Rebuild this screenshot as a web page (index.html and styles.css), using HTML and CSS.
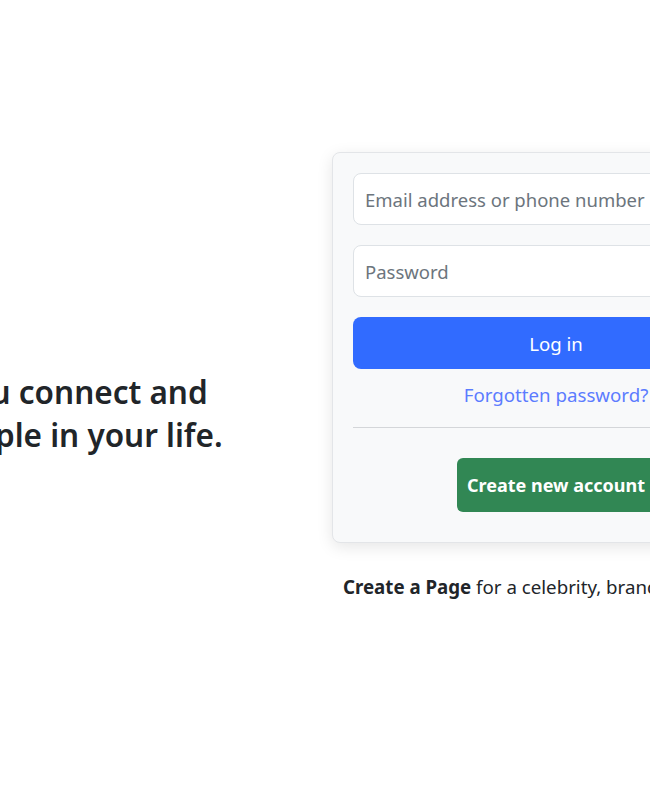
FILE: index.html
```html
<!DOCTYPE html>
<html lang="en">
<head>
<meta charset="utf-8">
<title>Facebook – log in or sign up</title>
<link rel="stylesheet" href="styles.css">
</head>
<body>
<main class="page">
  <section class="intro">
    <h2 class="tagline">Facebook helps you connect and share with the people in your life.</h2>
  </section>
  <section class="side">
    <div class="card">
      <form class="login-form">
        <input class="field" type="text" placeholder="Email address or phone number">
        <input class="field" type="password" placeholder="Password">
        <button class="btn-login" type="button">Log in</button>
      </form>
      <a class="forgot" href="#">Forgotten password?</a>
      <hr class="divider">
      <div class="create-wrap">
        <button class="btn-create" type="button">Create new account</button>
      </div>
    </div>
    <p class="page-note"><b>Create a Page</b> for a celebrity, brand or business.</p>
  </section>
</main>
</body>
</html>
```
FILE: styles.css
```css
html, body {
  margin: 0;
  background: #fff;
  overflow: hidden;
}
body {
  display: flex;
  justify-content: center;
  font-family: "Noto Sans", "Open Sans", sans-serif;
  color: #212529;
}
.page {
  flex: none;
  display: flex;
  gap: 94px;
  padding: 152px 162px 0 0;
}
.intro {
  flex: none;
  width: 530px;
  padding-top: 218px;
}
.tagline {
  margin: 0;
  font-size: 31.5px;
  font-weight: 600;
  line-height: 43px;
  color: #212529;
}
.side {
  flex: none;
  width: 448px;
}
.card {
  background: #f8f9fa;
  border: 1px solid #e3e5e8;
  border-radius: 8px;
  box-shadow: 0 4px 16px rgba(0, 0, 0, 0.1);
  padding: 20px 20px 30px;
}
.login-form {
  display: flex;
  flex-direction: column;
  gap: 20px;
}
.field {
  height: 52px;
  box-sizing: border-box;
  border: 1px solid #dee2e6;
  border-radius: 8px;
  background: #fff;
  padding: 0 11px;
  font-family: inherit;
  font-size: 18.5px;
  color: #212529;
}
.field::placeholder {
  color: #6c757d;
}
.btn-login {
  height: 52px;
  border: none;
  border-radius: 8px;
  background: #316bff;
  color: #fff;
  font-family: inherit;
  font-size: 18.6px;
}
.forgot {
  display: block;
  margin-top: 14px;
  text-align: center;
  font-size: 18.7px;
  line-height: 24px;
  color: #5c7cff;
  text-decoration: none;
}
.divider {
  margin: 20px 0 30px;
  border: none;
  border-top: 1px solid #d4d6d9;
}
.create-wrap {
  display: flex;
  justify-content: center;
}
.btn-create {
  height: 54px;
  padding: 0 10px;
  border: none;
  border-radius: 6px;
  background: #318754;
  color: #fff;
  font-family: inherit;
  font-size: 18px;
  font-weight: 700;
}
.page-note {
  margin: 32px 0 0;
  text-align: center;
  font-size: 18.7px;
  line-height: 24px;
  color: #212529;
}
.page-note b {
  font-weight: 700;
}
```
